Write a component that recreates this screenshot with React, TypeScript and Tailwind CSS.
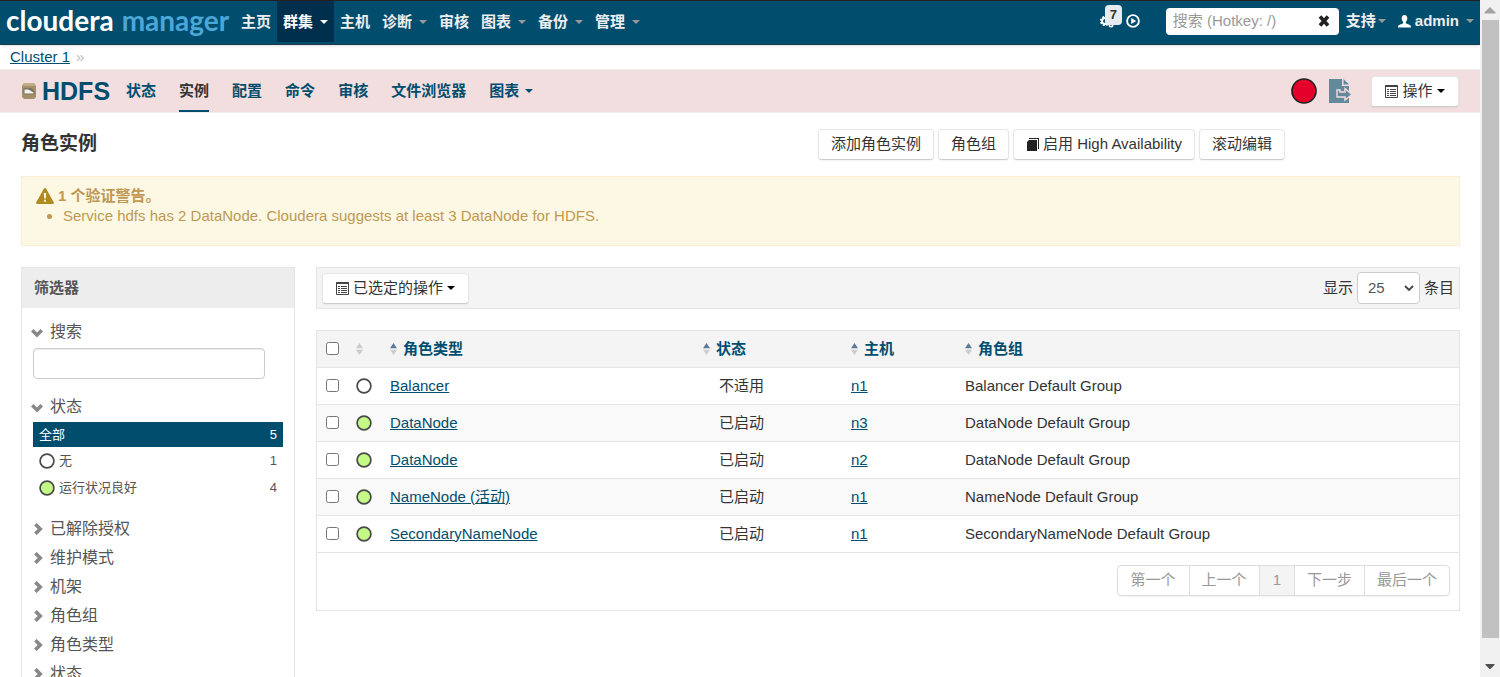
import React, { useState } from 'react';
import { FaCaretUp, FaCaretDown } from 'react-icons/fa';

interface Role {
  id: string;
  type: string;
  health: 'none' | 'good';
  state: string;
  host: string;
  group: string;
}

const roles: Role[] = [
  { id: 'balancer', type: 'Balancer', health: 'none', state: '不适用', host: 'n1', group: 'Balancer Default Group' },
  { id: 'dn3', type: 'DataNode', health: 'good', state: '已启动', host: 'n3', group: 'DataNode Default Group' },
  { id: 'dn2', type: 'DataNode', health: 'good', state: '已启动', host: 'n2', group: 'DataNode Default Group' },
  { id: 'nn', type: 'NameNode (活动)', health: 'good', state: '已启动', host: 'n1', group: 'NameNode Default Group' },
  { id: 'snn', type: 'SecondaryNameNode', health: 'good', state: '已启动', host: 'n1', group: 'SecondaryNameNode Default Group' },
];

const mainNav = [
  { label: '主页', caret: false },
  { label: '群集', caret: true, active: true },
  { label: '主机', caret: false },
  { label: '诊断', caret: true },
  { label: '审核', caret: false },
  { label: '图表', caret: true },
  { label: '备份', caret: true },
  { label: '管理', caret: true },
];

const serviceNav = ['状态', '实例', '配置', '命令', '审核', '文件浏览器'];
const closedFilters = ['已解除授权', '维护模式', '机架', '角色组', '角色类型', '状态'];

const Caret = ({ className = '' }: { className?: string }) => (
  <svg viewBox="0 0 8 4" className={`h-1 w-2 shrink-0 ${className}`} fill="currentColor" aria-hidden="true">
    <path d="M0 0h8L4 4z" />
  </svg>
);

const HealthDot = ({ health }: { health: Role['health'] }) => (
  <svg viewBox="0 0 16 16" className="size-4 shrink-0" aria-hidden="true">
    <circle cx="8" cy="8" r="6.9" fill={health === 'good' ? '#c3f985' : '#fff'} stroke="#4a4a4a" strokeWidth="1.7" />
  </svg>
);

const ListIcon = () => (
  <svg viewBox="0 0 13 13" className="size-[13px] shrink-0" fill="none" stroke="#444" aria-hidden="true">
    <path d="M.5 .5h12v12H.5z" />
    <path d="M0 1.2h13" strokeWidth="1.6" />
    <path d="M2 4.5h2M5 4.5h6M2 6.5h2M5 6.5h6M2 8.5h2M5 8.5h6M2 10.5h2M5 10.5h6" />
  </svg>
);

const Chevron = ({ open = false }: { open?: boolean }) => (
  <svg viewBox="0 0 12 12" className="size-3 shrink-0" fill="none" stroke="#888" strokeWidth="3.6" aria-hidden="true">
    <path d={open ? 'M1.2 4.2 6 9l4.8-4.8' : 'M2.4 1.2 7.2 6l-4.8 4.8'} />
  </svg>
);

const SortIcon = ({ active = false }: { active?: boolean }) => (
  <svg viewBox="0 0 7 12" className="h-3 w-[7px] shrink-0" aria-hidden="true">
    <path d="M0 5.3 3.5 0 7 5.3z" fill={active ? '#5c7a99' : '#ccc'} />
    <path d="M0 6.7h7L3.5 12z" fill="#ccc" />
  </svg>
);

const buttonClass =
  'flex h-[31px] items-center justify-center whitespace-nowrap rounded-sm border border-[#e6e6e6] border-b-[#ccc] bg-white text-[#333] shadow-xs';

function TopBar() {
  return (
    <header className="flex h-[45px] items-start border-y border-t-[#222] border-b-[#1d3c4d] bg-[#004d6e] font-bold text-[#eee] shadow-sm">
      <a
        href="#home"
        aria-label="cloudera manager"
        className="flex h-[38px] w-[235px] shrink-0 items-center gap-2 pl-[6px] font-[Lato,sans-serif] text-[28px] leading-none"
      >
        <span className="text-white">cloudera</span>
        <span className="text-[#4aa8d8]">manager</span>
      </a>
      <nav className="flex h-[41px]">
        {mainNav.map((item) => (
          <a
            key={item.label}
            href="#nav"
            className={`flex items-center gap-[7px] px-[6px] ${item.active ? 'bg-[#002f4d] text-white' : ''}`}
          >
            {item.label}
            {item.caret && <Caret className={item.active ? 'text-white' : 'text-[#999]'} />}
          </a>
        ))}
      </nav>
      <div className="ml-auto flex h-10 items-center pr-[6px]">
        <button type="button" aria-label="7 个正在运行的命令" className="relative mr-[26px] flex h-8 w-10 items-center">
          <svg viewBox="0 0 14 14" className="size-[14px] shrink-0" fill="none" stroke="#fff" aria-hidden="true">
            <circle cx="5" cy="7" r="2.9" strokeWidth="2" />
            <circle cx="5" cy="7" r="4.2" strokeWidth="1.8" strokeDasharray="1.9 1.4" />
            <circle cx="11" cy="11" r="1.7" strokeWidth="1.6" />
            <circle cx="11" cy="5" r="1.7" strokeWidth="1.6" />
          </svg>
          <span className="absolute left-[5px] top-0 flex h-5 w-[17px] items-center justify-center rounded-sm bg-[#e6ebf0] text-[13px] text-[#333]">7</span>
          <svg viewBox="0 0 14 14" className="ml-3 size-[14px] shrink-0" aria-hidden="true">
            <circle cx="7" cy="7" r="5.9" fill="none" stroke="#fff" strokeWidth="1.9" />
            <path d="M5.2 4v6l5-3z" fill="#fff" />
          </svg>
        </button>
        <div className="relative mr-[7px] flex h-[27px] w-[173px] items-center rounded-sm bg-white">
          <input
            type="text"
            aria-label="搜索"
            placeholder="搜索 (Hotkey: /)"
            className="w-full rounded-sm pl-[7px] pr-7 font-normal text-[#555] outline-none placeholder:text-[#999]"
          />
          <button type="button" aria-label="清除" className="absolute right-[9px]">
            <svg viewBox="0 0 12 12" className="size-3" stroke="#222" strokeWidth="3.6" aria-hidden="true">
              <path d="m2 1.5 8 9M10 1.5l-8 9" />
            </svg>
          </button>
        </div>
        <a href="#support" className="flex items-center gap-[2px]">
          支持
          <Caret className="text-[#999]" />
        </a>
        <a href="#admin" className="ml-3 flex items-center">
          <svg viewBox="0 0 13 13" className="mr-1 size-[13px]" fill="#fff" aria-hidden="true">
            <path d="M6.5 0C4.6 0 3.7 1.3 3.7 3.2c0 1.5.6 2.9 1.5 3.7v1.4l-4 1.7C.4 10.4 0 11 0 12.5h13c0-1.5-.4-2.1-1.2-2.5l-4-1.7V6.9c.9-.8 1.5-2.2 1.5-3.7C9.3 1.3 8.4 0 6.5 0z" />
          </svg>
          admin
          <Caret className="ml-[7px] text-[#999]" />
        </a>
      </div>
    </header>
  );
}

function ServiceBar() {
  return (
    <div className="flex h-11 shrink-0 items-center border-y border-[#eee] bg-[#f2dede] pl-[22px] pr-[21px] font-bold text-[#004d6e]">
      <svg viewBox="0 0 14 16" className="mr-[6px] h-4 w-[14px] shrink-0" aria-hidden="true">
        <path d="M2 0h10l2 3v11l-2 2H2l-2-2V3z" fill="#a58f6b" />
        <path d="M2 0h10l1 3H1z" fill="#c2ad87" />
        <path d="M1.5 5h8l3 3v3.500h-11z" fill="#7d7263" />
        <path d="M2.5 10.500v-4h4l5 3v1z" fill="#f0f0f0" />
      </svg>
      <h1 className="text-[25px] leading-none">HDFS</h1>
      <nav className="ml-4 flex h-full gap-[23px]">
        {serviceNav.map((label) => (
          <a
            key={label}
            href="#tab"
            className={`flex items-center border-b-2 pt-[2px] ${label === '实例' ? 'border-[#004d6e] text-[#333]' : 'border-transparent'}`}
          >
            {label}
          </a>
        ))}
        <a href="#charts" className="flex items-center gap-[6px] border-b-2 border-transparent pt-[2px]">
          图表
          <Caret />
        </a>
      </nav>
      <svg viewBox="0 0 26 26" className="ml-auto size-[26px]" role="img" aria-label="运行状况不良">
        <circle cx="13" cy="13" r="12" fill="#e4002b" stroke="#222" strokeWidth="1.7" />
      </svg>
      <svg viewBox="0 0 24 26" className="ml-3 h-[26px] w-6" aria-hidden="true">
        <path d="M0 1h13v7h7v17H0z" fill="#62899c" />
        <path d="M14.5 1 20 6.5h-5.5z" fill="#62899c" />
        <path d="M8 12v7h8v3l7-5.500-7-6v3.500h-5v-2z" fill="#62899c" stroke="#f2dede" strokeWidth="1.4" />
      </svg>
      <button type="button" className={`${buttonClass} ml-[18px] w-[88px] font-normal`}>
        <ListIcon />
        <span className="mx-1">操作</span>
        <Caret className="text-black" />
      </button>
    </div>
  );
}

function Filters() {
  return (
    <aside className="w-[274px] shrink-0 border border-[#e5e5e5] text-[#555]">
      <h3 className="flex h-10 items-center bg-[#ededed] pl-3 font-bold">筛选器</h3>
      <div className="px-[11px] pt-3">
        <button type="button" className="-ml-[2px] flex h-6 items-center gap-[7px] text-base">
          <Chevron open />
          搜索
        </button>
        <input
          type="text"
          aria-label="搜索角色"
          className="mt-1 block h-[31px] w-[232px] rounded-sm border border-[#ccc] px-2 shadow-[inset_0_1px_1px_rgba(0,0,0,0.08)] outline-none"
        />
        <button type="button" className="-ml-[2px] mt-4 flex h-6 items-center gap-[7px] text-base">
          <Chevron open />
          状态
        </button>
        <ul className="mt-[3px] text-[13px]">
          <li className="flex h-[25px] items-center bg-[#004d6e] px-[6px] text-white">
            全部<span className="ml-auto">5</span>
          </li>
          <li className="flex h-[27px] items-center gap-1 px-[6px]">
            <HealthDot health="none" />
            无<span className="ml-auto">1</span>
          </li>
          <li className="flex h-[27px] items-center gap-1 px-[6px]">
            <HealthDot health="good" />
            运行状况良好<span className="ml-auto">4</span>
          </li>
        </ul>
        <ul className="mt-[13px] text-base">
          {closedFilters.map((label) => (
            <li key={label}>
              <button type="button" className="flex h-[29px] items-center gap-[5px]">
                <Chevron />
                {label}
              </button>
            </li>
          ))}
        </ul>
      </div>
    </aside>
  );
}

function RoleTable() {
  const [selected, setSelected] = useState<string[]>([]);

  const toggle = (id: string) =>
    setSelected(selected.includes(id) ? selected.filter((s) => s !== id) : [...selected, id]);

  return (
    <div className="mt-[21px] border border-[#e5e5e5]">
      <table className="w-full table-fixed text-left">
        <colgroup>
          <col className="w-[31px]" />
          <col className="w-[34px]" />
          <col className="w-[313px]" />
          <col className="w-[148px]" />
          <col className="w-[114px]" />
          <col />
        </colgroup>
        <thead>
          <tr className="h-9 border-b border-[#e5e5e5] bg-[#f4f4f4] text-[#004d6e]">
            <th className="pl-[9px]">
              <input
                type="checkbox"
                aria-label="全选"
                className="block size-[13px]"
                checked={selected.length === roles.length}
                onChange={(e) => setSelected(e.target.checked ? roles.map((r) => r.id) : [])}
              />
            </th>
            <th className="pl-2"><SortIcon /></th>
            {['角色类型', '状态', '主机', '角色组'].map((label) => (
              <th key={label} className="pl-2">
                <button type="button" className="flex items-center gap-[6px] font-bold">
                  <SortIcon active />
                  {label}
                </button>
              </th>
            ))}
          </tr>
        </thead>
        <tbody>
          {roles.map((role) => (
            <tr key={role.id} className="h-[37px] border-b border-[#e5e5e5] even:bg-[#f9f9f9]">
              <td className="pl-[9px]">
                <input
                  type="checkbox"
                  aria-label={role.type}
                  className="block size-[13px]"
                  checked={selected.includes(role.id)}
                  onChange={() => toggle(role.id)}
                />
              </td>
              <td className="pl-2"><HealthDot health={role.health} /></td>
              <td className="pl-2"><a href="#role" className="text-[#004d6e] underline">{role.type}</a></td>
              <td className="pl-6">{role.state}</td>
              <td className="pl-2"><a href="#host" className="text-[#004d6e] underline">{role.host}</a></td>
              <td className="pl-2">{role.group}</td>
            </tr>
          ))}
        </tbody>
      </table>
      <div className="flex justify-end px-[9px] pb-[14px] pt-3">
        <div className="flex h-[31px] divide-x divide-[#ddd] rounded-sm border border-[#ddd] text-[#999] shadow-xs">
          <button type="button" className="px-[13px]">第一个</button>
          <button type="button" className="px-3">上一个</button>
          <button type="button" className="bg-[#f4f4f4] px-[13px]">1</button>
          <button type="button" className="px-3">下一步</button>
          <button type="button" className="px-3">最后一个</button>
        </div>
      </div>
    </div>
  );
}

function ScrollTrack() {
  return (
    <div className="flex w-5 shrink-0 flex-col items-center bg-[#f1f1f1]" aria-hidden="true">
      <FaCaretUp className="h-5 w-3 shrink-0 text-[#a3a3a3]" />
      <div className="w-[17px] grow bg-[#c1c1c1]" />
      <div className="flex h-[39px] items-end pb-[3px]">
        <FaCaretDown className="h-4 w-3 text-[#505050]" />
      </div>
    </div>
  );
}

export default function App() {
  return (
    <div className="flex h-screen overflow-hidden bg-white font-['Liberation_Sans','Noto_Sans_CJK_SC',sans-serif] text-[15px] leading-5 text-[#333]">
      <div className="min-w-0 grow overflow-hidden">
        <TopBar />
        <div className="flex h-6 items-center gap-[6px] pl-[10px]">
          <a href="#cluster" className="text-[#004d6e] underline">Cluster 1</a>
          <span className="text-[#bbb]">»</span>
        </div>
        <ServiceBar />
        <main className="pl-[21px] pr-5">
          <div className="flex items-center pt-[15px]">
            <h2 className="text-[19px] font-bold leading-8">角色实例</h2>
            <div className="ml-auto mr-[175px] flex gap-1">
              <button type="button" className={`${buttonClass} px-3`}>添加角色实例</button>
              <button type="button" className={`${buttonClass} px-3`}>角色组</button>
              <button type="button" className={`${buttonClass} gap-1 px-3`}>
                <svg viewBox="0 0 13 13" className="size-[13px]" aria-hidden="true">
                  <path d="M3 0h10v11h-1V1H3z" fill="#222" />
                  <path d="M3 2h8v11H1V4z" fill="#222" />
                </svg>
                启用 High Availability
              </button>
              <button type="button" className={`${buttonClass} px-3`}>滚动编辑</button>
            </div>
          </div>
          <section className="mt-4 h-[70px] border border-[#fbeed5] bg-[#fcf8e3] pl-[14px] pt-[9px] text-[#c09853]">
            <p className="flex items-center gap-1 font-bold">
              <svg viewBox="0 0 18 16" className="h-4 w-[18px]" aria-hidden="true">
                <path d="M9 0q.8 0 1.2.8l7.5 13.500q.5 1.700-1 1.700H1.300q-1.500 0-1-1.700L7.800.8Q8.200 0 9 0z" fill="#ae8a20" />
                <path d="M7.800 5h2.400l-.4 5.500H8.200zM8 11.700h2v2H8z" fill="#fcf8e3" />
              </svg>
              1 个验证警告。
            </p>
            <ul className="list-disc pl-[27px]">
              <li>Service hdfs has 2 DataNode. Cloudera suggests at least 3 DataNode for HDFS.</li>
            </ul>
          </section>
          <div className="mt-[21px] flex gap-[21px]">
            <Filters />
            <section className="min-w-0 grow">
              <div className="flex h-[42px] items-center border border-[#e5e5e5] bg-[#f4f4f4] px-[5px]">
                <button type="button" className={`${buttonClass} px-[13px]`}>
                  <ListIcon />
                  <span className="mx-1">已选定的操作</span>
                  <Caret className="text-black" />
                </button>
                <label className="ml-auto flex items-center gap-1">
                  显示
                  <span className="relative flex items-center">
                    <select defaultValue="25" className="h-8 w-[63px] appearance-none rounded-sm border border-[#ccc] bg-white pl-[10px] text-[#555]">
                      <option>10</option>
                      <option>25</option>
                      <option>50</option>
                    </select>
                    <svg viewBox="0 0 10 6" className="pointer-events-none absolute right-[6px] h-[6px] w-[10px]" fill="none" stroke="#444" strokeWidth="1.8" aria-hidden="true">
                      <path d="m1 1 4 4 4-4" />
                    </svg>
                  </span>
                  条目
                </label>
              </div>
              <RoleTable />
            </section>
          </div>
        </main>
      </div>
      <ScrollTrack />
    </div>
  );
}
